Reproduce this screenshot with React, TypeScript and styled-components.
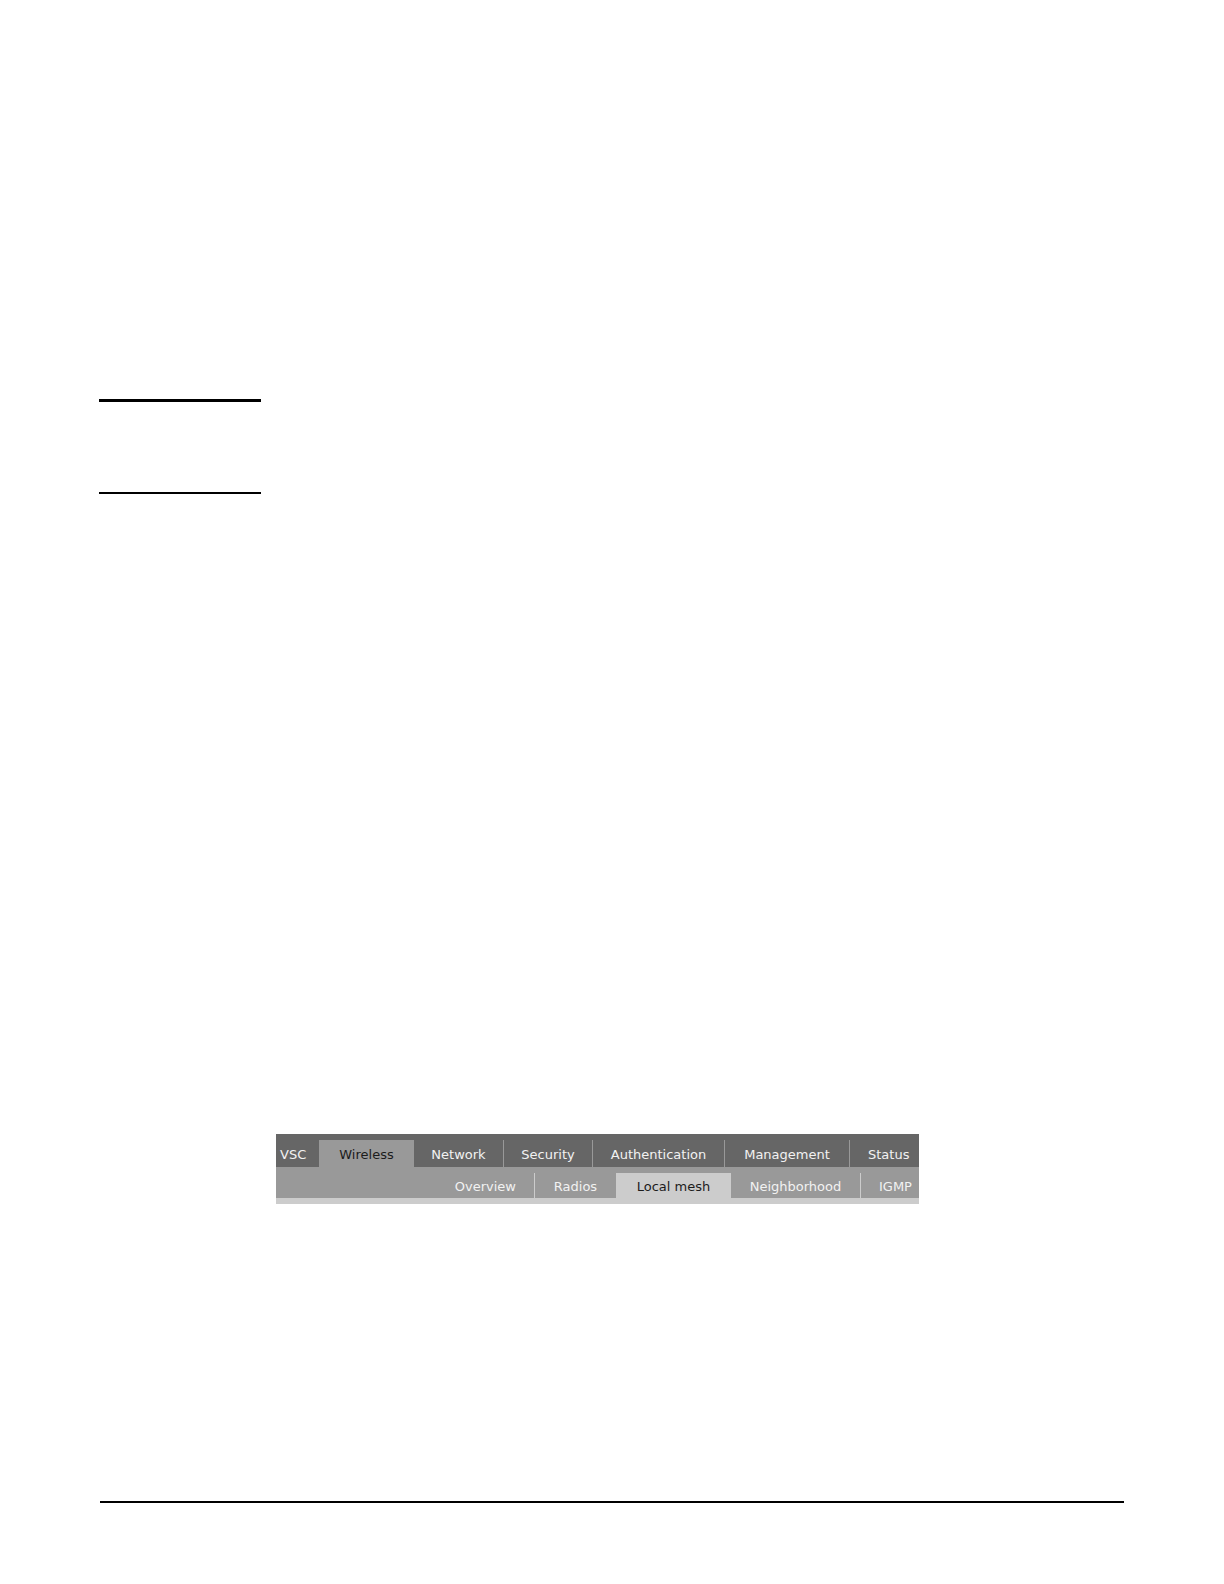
import React from "react";
import styled, { createGlobalStyle } from "styled-components";

const GlobalStyle = createGlobalStyle`
  * { box-sizing: border-box; }
  body { margin: 0; background: #fff; }
`;

const Page = styled.main`
  padding: 399px 100px 80px 99px;
  font: 13px/16px "DejaVu Sans", Verdana, sans-serif;
`;

const Note = styled.aside`
  width: 162px;
  height: 95px;
  border-top: 3px solid #000;
  border-bottom: 2px solid #000;
`;

const Figure = styled.section`
  max-width: 643px;
  margin: 640px 0 297px;
  background: #666;
  border-bottom: 6px solid #ccc;
`;

const Indented = styled.div`
  padding-left: 177px;
`;

const TabRow = styled.nav<{ $columns: string; $background: string }>`
  display: grid;
  grid-template-columns: ${(p) => p.$columns};
  padding-top: 6px;
  background: ${(p) => p.$background};
`;

const Tab = styled.a<{
  $level: "main" | "sub";
  $active?: boolean;
  $divider?: boolean;
  $align?: "start" | "center" | "end";
  $inset?: number;
}>`
  display: flex;
  justify-content: ${(p) => p.$align ?? "center"};
  align-items: center;
  height: ${(p) => (p.$level === "main" ? 27 : 25)}px;
  padding: 2px ${(p) => (p.$align === "end" ? p.$inset : 0)}px 0
    ${(p) => (p.$align === "start" ? p.$inset : 0)}px;
  border-left: ${(p) => (p.$divider ? 1 : 0)}px solid
    ${(p) => (p.$level === "main" ? "#999" : "#ccc")};
  background: ${(p) =>
    p.$active ? (p.$level === "main" ? "#999" : "#ccc") : "transparent"};
  color: ${(p) => (p.$active ? "#1c1c1c" : "#f2f2f2")};
  white-space: nowrap;
  text-decoration: none;
`;

const FooterRule = styled.hr`
  height: 2px;
  margin: 0 0 0 1px;
  border: 0;
  background: #000;
`;

const MAIN_COLUMNS = "43fr 95fr 89fr 89fr 132fr 125fr 70fr";
const SUB_COLUMNS = "258fr 82fr 115fr 129fr 59fr";

export default function App() {
  return (
    <>
      <GlobalStyle />
      <Page>
        <Note />
        <Indented>
          <Figure>
            <TabRow aria-label="Main" $columns={MAIN_COLUMNS} $background="#666">
              <Tab href="#vsc" $level="main" $align="start" $inset={4}>VSC</Tab>
              <Tab href="#wireless" $level="main" $active>Wireless</Tab>
              <Tab href="#network" $level="main">Network</Tab>
              <Tab href="#security" $level="main" $divider>Security</Tab>
              <Tab href="#authentication" $level="main" $divider>Authentication</Tab>
              <Tab href="#management" $level="main" $divider>Management</Tab>
              <Tab href="#status" $level="main" $divider $align="start" $inset={18}>Status</Tab>
            </TabRow>
            <TabRow aria-label="Wireless" $columns={SUB_COLUMNS} $background="#999">
              <Tab href="#overview" $level="sub" $align="end" $inset={18}>Overview</Tab>
              <Tab href="#radios" $level="sub" $divider>Radios</Tab>
              <Tab href="#local-mesh" $level="sub" $active>Local mesh</Tab>
              <Tab href="#neighborhood" $level="sub">Neighborhood</Tab>
              <Tab href="#igmp" $level="sub" $divider $align="start" $inset={18}>IGMP</Tab>
            </TabRow>
          </Figure>
        </Indented>
        <FooterRule />
      </Page>
    </>
  );
}
